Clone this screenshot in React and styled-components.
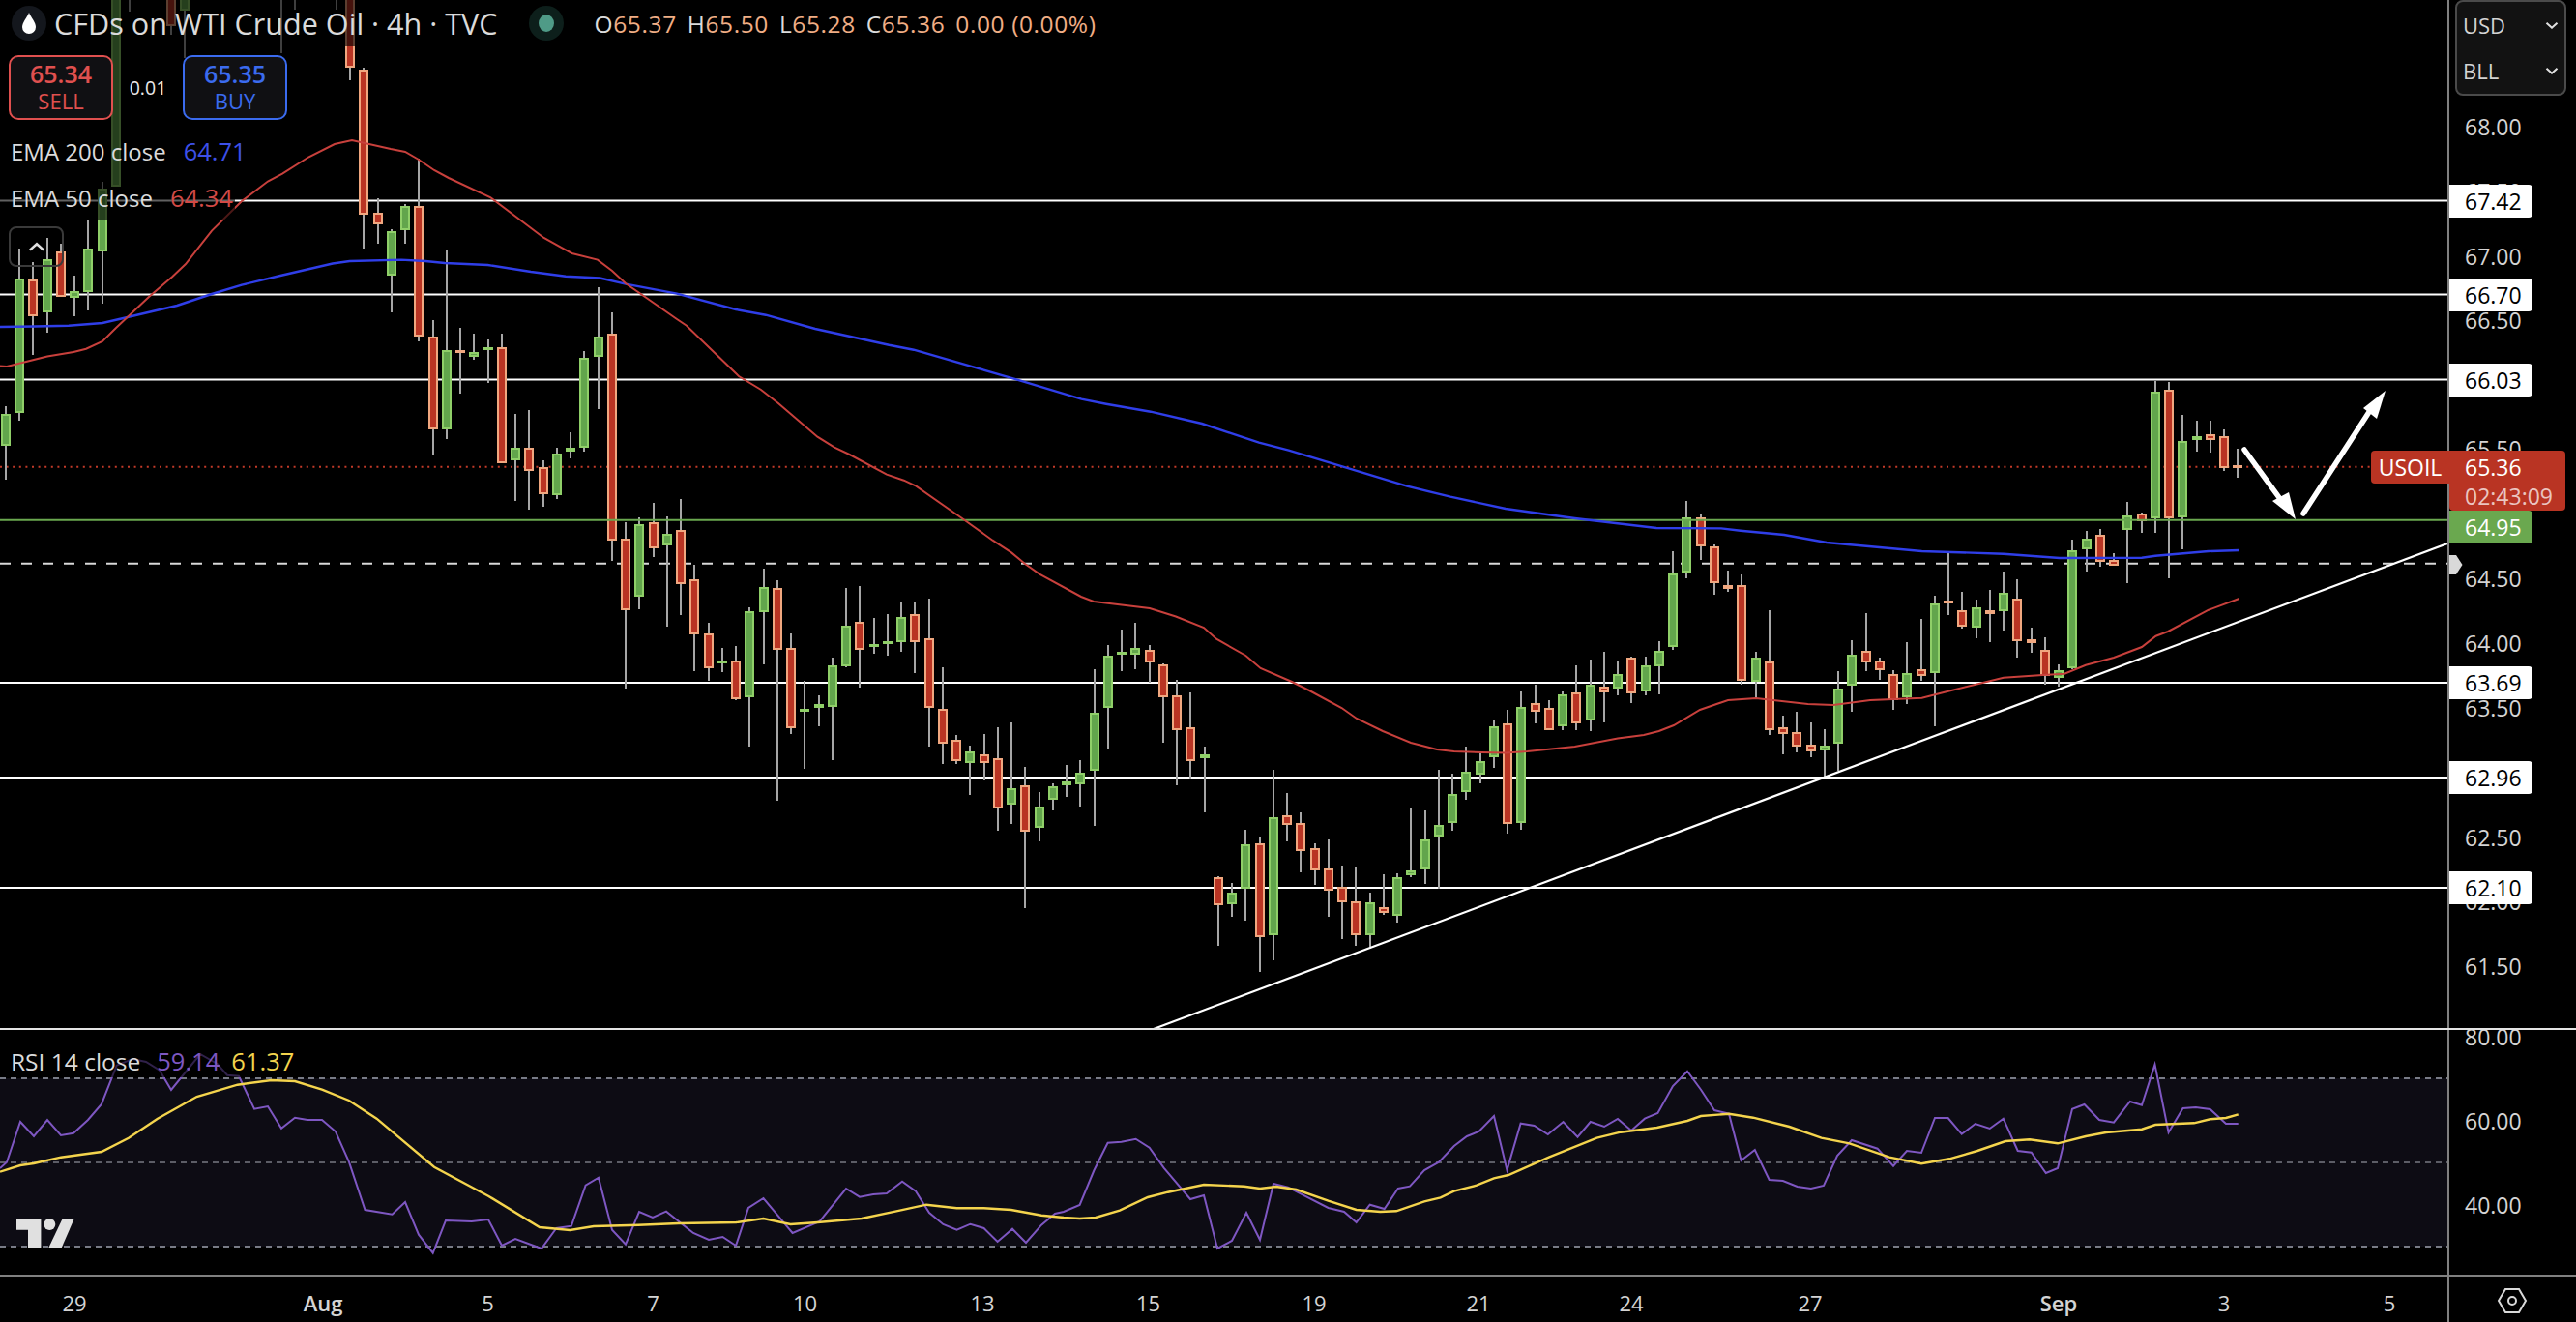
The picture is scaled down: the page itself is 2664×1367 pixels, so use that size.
import React from "react";
import styled, { createGlobalStyle } from "styled-components";

// [index, wickTop, bodyTop, bodyBottom, wickBottom, "g" | "r"], all in page pixels
const CANDLES = [
  [0,420,427.5,461,496,"g"],[1,257,287.5,427,435,"g"],[2,271,288.5,327,367,"r"],[3,246,268,323,343.5,"g"],
  [4,252,259.5,307,307,"r"],[5,285,300.5,308,327,"g"],[6,228,256.5,302,321,"g"],[7,188,195,259.5,314,"g"],
  [8,-10,-10,193,193,"g"],[9,-10,-10,-5,12,"g"],[12,-10,-10,27,36,"r"],[13,-10,-10,11,60,"g"],
  [20,-10,-10,-5,55,"g"],[21,-10,-10,-5,10,"g"],[24,-10,-10,-5,10,"g"],[25,-10,-10,70,83,"r"],
  [26,70,71.5,221.5,256.5,"r"],[27,205,219.5,231.5,252,"r"],[28,237,239,284.5,322.5,"g"],[29,211,212.5,237.5,252,"g"],
  [30,164,213,348,352.5,"r"],[31,331,347.5,444,470,"r"],[32,259,361.5,443.5,454,"g"],[33,339,362,364,407,"r"],
  [34,345,364,369,372,"g"],[35,351,358.5,360.5,396,"g"],[36,345,359,478.5,478.5,"r"],[37,428,463,476,518,"g"],
  [38,424,462.5,486.5,527,"r"],[39,476,483,511,524,"r"],[40,463,468.5,512,516,"g"],[41,447,463,467,474,"g"],
  [42,363,370,462.5,467,"g"],[43,297,348,368.5,422.5,"g"],[44,323,345,559,579.5,"r"],[45,540,556.5,630.5,712,"r"],
  [46,535,542,617,629.5,"g"],[47,520,540,567,575.5,"r"],[48,534,551.5,563.5,647.5,"g"],[49,516,547.5,603.5,635.5,"r"],
  [50,584,599,655.5,694,"r"],[51,644,654.5,690.5,703.5,"r"],[52,670,683,685,694.5,"g"],[53,668,683,722.5,724,"r"],
  [54,628,631.5,720.5,772,"g"],[55,587.5,607,632.5,687,"g"],[56,600,608,672,827.5,"r"],[57,655,670,752.5,759,"r"],
  [58,704,733,735,794.5,"g"],[59,719,728,732,750.5,"g"],[60,680,687.5,730.5,785.5,"g"],[61,608,646.5,688.5,689.5,"g"],
  [62,606,642.5,672,710.5,"r"],[63,639,666,668.5,675.5,"g"],[64,635,663,665,677.5,"g"],[65,623,638,663.5,674,"g"],
  [66,623,635,663.5,695.5,"r"],[67,619,660,732,772,"r"],[68,690,732.5,768.5,789.5,"r"],[69,760,764.5,787,789.5,"r"],
  [70,771,776.5,788.5,822,"g"],[71,759,780,788.5,807,"r"],[72,752,784,835.5,858.5,"r"],[73,747,814.5,832,852,"g"],
  [74,792.5,811.5,859.5,938.5,"r"],[75,819,834,855.5,869.5,"g"],[76,810,812.5,826.5,837.5,"g"],[77,791,808,812,824,"g"],
  [78,786,799,810.5,833.5,"g"],[79,692,736.5,796.5,853.5,"g"],[80,667,678,732,773.5,"g"],[81,651,674,676,694,"g"],
  [82,644,670,677,692,"g"],[83,667,671.5,684.5,706,"r"],[84,686,686.5,720.5,768,"r"],[85,703,719,754.5,812,"r"],
  [86,716,751.5,786.5,805.5,"r"],[87,772,780,783.5,839.5,"g"],[88,906,906.5,935.5,977.5,"r"],[89,912.5,922.5,934.5,948,"g"],
  [90,858,872.5,918.5,952,"g"],[91,866,871.5,968.5,1004.5,"r"],[92,795.5,844.5,967,993,"g"],[93,820,842.5,852.5,869.5,"r"],
  [94,840,850.5,879.5,902,"r"],[95,872,876.5,899.5,915,"r"],[96,868,898,920.5,948,"r"],[97,895,916.5,932.5,970.5,"r"],
  [98,895.5,931.5,967,977.5,"r"],[99,923,932.5,967,978.5,"g"],[100,904,938,943.5,945.5,"r"],[101,903,906.5,947,953.5,"g"],
  [102,835,900,904.5,907,"g"],[103,838,868,898.5,913.5,"g"],[104,796,852.5,864.5,918.5,"g"],[105,800,820.5,850.5,858.5,"g"],
  [106,772,798,818.5,827,"g"],[107,778.5,786.5,800.5,809.5,"g"],[108,744,750.5,782.5,793.5,"g"],[109,734,747.5,852,862,"r"],
  [110,715,730.5,850.5,857.5,"g"],[111,708,726.5,735.5,748,"r"],[112,724,731.5,754.5,754.5,"r"],[113,715,718,750.5,754.5,"g"],
  [114,688,715.5,747.5,755,"r"],[115,682,707.5,744.5,755.5,"g"],[116,674,710,715.5,747,"r"],[117,683,696.5,712,718.5,"g"],
  [118,679,680,716.5,727,"r"],[119,679,687.5,714.5,718.5,"g"],[120,662.5,672.5,688.5,717.5,"g"],[121,570,592.5,668.5,672,"g"],
  [122,518,534.5,592,597.5,"g"],[123,531,535,564.5,579,"r"],[124,563,564.5,602.5,614.5,"r"],[125,590,604.5,608.5,612,"r"],
  [126,594,604.5,703.5,707.5,"r"],[127,674,680,704.5,722.5,"g"],[128,631,683.5,754.5,759.5,"r"],[129,740,751.5,758.5,779.5,"r"],
  [130,736,756.5,772,778,"r"],[131,747,770,777,783,"r"],[132,754,771,775.5,803.5,"g"],[133,694,711.5,768.5,796.5,"g"],
  [134,662,676.5,708.5,735.5,"g"],[135,634,672.5,684.5,694,"r"],[136,680,682.5,692.5,702.5,"r"],[137,692.5,696.5,723.5,734,"r"],
  [138,664,695.5,720.5,728,"g"],[139,640,691.5,698.5,704,"r"],[140,616,623.5,695.5,750.5,"g"],[141,570.5,620.5,623.5,635.5,"r"],
  [142,612,630.5,647.5,649.5,"r"],[143,620,627.5,648.5,660,"g"],[144,610,630.5,634.5,663.5,"r"],[145,591,612.5,631.5,652,"g"],
  [146,599,618.5,662.5,679.5,"r"],[147,648.5,660.5,664.5,674.5,"r"],[148,659,671.5,699,708,"r"],[149,687,692.5,700.5,709.5,"g"],
  [150,558,568.5,690.5,691.5,"g"],[151,548.5,556.5,567.5,590.5,"g"],[152,547,552.5,580.5,585.5,"r"],[153,572,578.5,584.5,584.5,"r"],
  [154,518.5,532.5,547.5,602.5,"g"],[155,530,530.5,538.5,550.5,"r"],[156,393.5,404.5,535.5,550.5,"g"],[157,395,402.5,535.5,597.5,"r"],
  [158,428.5,455.5,534.5,567.5,"g"],[159,435,450.5,454.5,466.5,"g"],[160,435,448.5,454.5,467.5,"r"],[161,444,450.5,483.5,487,"r"],
  [162,464,481,482.5,494,"r"],
];

const EMA_50 = "0,378.6 7,379 27,374 49,368.6 76,364 89,360.7 106,353 120,339 154,307 178.6,285.7 192,273 219,238.6 250,208 277,187.5 292,179.6 319,162.5 346,149 364,145 404,154 419,157 433,165 449,176 464,184 507,204 562.5,246 591.5,262 618,268.6 633,280 647,293 700,330 710,336.7 764,389 787,403 804.6,416.7 845.4,451.7 863,462.7 878.6,470 917,490.7 934.7,496.7 947.4,502.7 996,536.7 1026.5,558.7 1046,571.4 1060,583 1075,593.6 1118,617 1131,622 1189,629 1216,637.5 1245,649 1258,660.7 1288.4,678 1303.6,691 1336,705 1354,714 1387.5,732 1403,743 1430,756 1459,768 1486,775 1503.6,777 1532.6,778 1557,778.6 1579.5,777 1628.6,772 1673,763.6 1700,760 1715.6,756 1731,750 1758,734 1787,724 1816,722 1869.6,728 1896,729 1934,724 1987.5,721.7 2014,715 2072,700.7 2112.5,698 2135,696.7 2157,687.7 2186,680 2215,669 2229.5,657.7 2242,653 2284,630.7 2315.6,619";
const EMA_200 = "0,338 36,337.5 71,336.8 106,334 134,327.5 183,316 219,304 250,294.6 290,285 344,272.5 361.6,270 415,268.6 440,270 460,272 504.5,274 549,281 585,285.7 620.5,287.5 647,293.6 700,303.6 761,320 792,325.7 843,340 919.4,356.7 945,361.7 1052,392.7 1118.4,412.7 1144,417.7 1190,425.7 1243,438 1302,457.7 1332.7,465.7 1389,482.7 1455,502.7 1500,513.7 1557,526 1628.6,536 1713,546 1780,546.4 1800,548.7 1845,553 1889,561 1987.5,570 2072,572.7 2130,577 2215,576.7 2229,574.7 2284,570 2315.6,569";
const RSI = "0,1208 7,1201.7 21,1160 35,1175 49,1158 63,1174 76,1171.7 91,1158 105,1141.7 120.7,1101.7 137,1095 151,1098 165,1106.7 177,1127 207,1090 224.6,1100 235,1111.7 247,1112.7 263,1146.7 277,1144 291,1166.7 305,1155.7 318,1158 333,1158 347,1170 361,1201.7 377.5,1251 405.6,1255.7 419,1243 433,1276.7 447.7,1295.7 461,1262 487.7,1263 505,1261 519,1288 533,1281 560,1291 575.4,1270 590.9,1267.7 605.6,1225.7 619,1217.7 633,1271.7 647,1286.7 661,1253 675,1259 689,1252.7 717,1275 733,1282 747.4,1279 761,1288 774,1249 789.5,1239 819.6,1275 847.7,1263 875,1229 889,1237.7 903,1235 917,1234 933,1221.7 947,1231.7 961,1254 975.4,1266 989.5,1271.7 1003.5,1265.7 1017.5,1270 1031.6,1284 1047,1270.7 1061,1285 1077,1266.7 1091,1255 1100,1253 1116.6,1246 1131.5,1210 1145.6,1181.7 1159.7,1180.7 1174.6,1177.7 1188.7,1186.7 1203.6,1207.7 1231,1240 1245,1236 1259,1291 1274,1283 1289,1254 1303,1282 1317,1224 1332,1227.7 1373.6,1249 1390,1253 1402.7,1264 1416.7,1245.7 1431.7,1250 1445.8,1229 1458,1226.7 1473,1210 1488,1201.7 1503.8,1185 1517,1175 1529.5,1170 1545,1154 1558.5,1210 1572.6,1161.7 1586.7,1164 1600.8,1173 1616.6,1160 1631.5,1175.7 1644.8,1160 1659,1165 1673,1157 1687,1169 1701,1156.7 1714.4,1151 1730,1123 1745,1107.7 1759,1126.7 1773,1148 1788,1151.7 1800.6,1200 1814.8,1189 1829.7,1220 1843.8,1221 1858.7,1227 1872.8,1229 1886,1226 1900,1195 1915,1179 1941.6,1187.7 1958,1205.7 1972,1190 1987,1192 2001,1156 2014.6,1156 2028.7,1172.7 2042.8,1162 2057.7,1167 2071.8,1156.7 2086.7,1190 2100.8,1191.7 2115.8,1213 2128,1208 2143,1146.7 2155.6,1142 2171,1158 2186,1160.7 2202.8,1139 2215,1142.7 2228.5,1100.7 2242.6,1171 2257.5,1146 2270.8,1145 2285.7,1147 2302,1162 2314.7,1162";
const RSI_MA = "0,1211.7 21,1205 35,1203 63,1196.7 105,1191 133,1176.7 163,1156.7 203.5,1134 245.6,1121.7 280.7,1117 305,1118 333,1126.7 361,1138 389.5,1156.7 449,1206.7 505,1236.7 558,1269 589.5,1272 614,1268 660,1266.7 701.8,1265 761.4,1264 789.5,1260 817.5,1266 845.6,1264 891,1260 926,1252.7 958,1245.7 989.5,1249.3 1017.5,1249.3 1045.6,1251 1077,1256.7 1100,1259 1116.6,1260 1133,1259 1158,1251.7 1187,1238 1207.8,1232.7 1245,1225 1286.6,1226.7 1303,1229 1319.7,1227 1340.5,1230 1373.6,1241.7 1402.7,1251 1427.5,1253 1444,1252.3 1473,1242.3 1489.7,1238.3 1503.8,1231.7 1527,1225.7 1545,1218.3 1560,1215 1601.7,1196.7 1651.4,1176.7 1676,1170.7 1713.6,1166 1745,1159 1759,1154 1788,1151.7 1813,1155.7 1850.4,1165 1883.6,1176.7 1912.6,1182.3 1954,1196.7 1987,1203.3 2016,1198.3 2045,1190 2074,1180 2099,1178.3 2128,1182.3 2157,1175 2178,1171 2215,1167.7 2229,1163 2269,1161.3 2285.7,1157.3 2302,1156 2314.7,1152.3";

const LEVELS = [207.5, 304.5, 392.5, 706, 804, 918];
const AXIS_TICKS = [[68, 131], [67.5, 198], [67, 264.5], [66.5, 331], [65.5, 464], [64.5, 598], [64, 665], [63.5, 732], [62.5, 866], [62, 932], [61.5, 999]];
const AXIS_MARKS = [["67.42", 208], ["66.70", 305], ["66.03", 393], ["63.69", 706], ["62.96", 804], ["62.10", 918]];
const DATES = [["29", 77], ["Aug", 334, true], ["5", 504.5], ["7", 675.5], ["10", 832.5], ["13", 1016], ["15", 1187.5], ["19", 1359], ["21", 1529], ["24", 1687], ["27", 1872], ["Sep", 2129, true], ["3", 2300], ["5", 2471]];

const GREEN = "#6aa84f";
const RED = "#b93423";
const FONT = `"Open Sans", "Liberation Sans", sans-serif`;

const GlobalStyle = createGlobalStyle`
  html, body { margin: 0; background: #000; }
  body { font-family: ${FONT}; color: #dbdbdb; overflow: hidden; }
`;

const Page = styled.div` width: 2664px; height: 1367px; background: #000; display: flex; flex-direction: column; `;
const Row = styled.div`
  display: grid; grid-template-columns: 2531px 1fr;
  height: ${p => p.$h}px; box-sizing: border-box;
  border-bottom: ${p => p.$line ? `2px solid ${p.$line}` : "none"};
`;
const Pane = styled.div` position: relative; overflow: hidden; `;
const ChartSvg = styled.svg` display: block; `;

const Legend = styled.div` position: absolute; top: 0; left: 0; display: flex; flex-direction: column; align-items: flex-start; `;
const LegendRow = styled.div`
  display: flex; align-items: center; gap: ${p => p.$gap || 0}px; box-sizing: border-box;
  height: ${p => p.$h}px; padding: 0 ${p => p.$pr ?? 0}px 0 ${p => p.$pl ?? 11}px;
  margin-top: ${p => p.$mt || 0}px;
  font-size: ${p => p.$size || 24}px; white-space: nowrap;
  background: rgba(0, 0, 0, .62);
`;
const SymbolIcon = styled.span`
  width: 36px; height: 36px; border-radius: 50%; background: #14171d; margin-right: 8px;
  display: flex; align-items: center; justify-content: center;
`;
const Title = styled.span` font-size: 30.6px; color: #dbdbdb; `;
const StatusDot = styled.span`
  width: 36px; height: 36px; border-radius: 50%; background: #0d1f1b; margin: 0 32px;
  display: flex; align-items: center; justify-content: center;
  &::after { content: ""; width: 16px; height: 18px; border-radius: 50%; background: #4f9b87; }
`;
const Ohlc = styled.span` font-size: 24.5px; letter-spacing: .6px; color: #dbdbdb; margin-right: 11px; `;
const Peach = styled.span` color: #f0ae85; `;
const TradeBox = styled.div`
  width: 108px; height: 67px; box-sizing: border-box; border-radius: 10px;
  border: 2px solid ${p => p.$color}; background: #101013; color: ${p => p.$color};
  display: flex; flex-direction: column; align-items: center; justify-content: center;
  line-height: 28px;
`;
const TradePrice = styled.span` font-size: 25px; font-weight: 600; `;
const TradeLabel = styled.span` font-size: 22px; `;
const Spread = styled.span` width: 72px; text-align: center; font-size: 19.5px; color: #e8e8e8; `;
const Value = styled.span` font-size: 25.5px; color: ${p => p.$color}; margin-left: ${p => p.$ml || 0}px; `;
const CollapseBtn = styled.div`
  width: 57px; height: 42px; box-sizing: border-box; margin: 6px 0 0 9px;
  border: 2px solid #3a3a3a; border-radius: 8px;
  display: flex; align-items: center; justify-content: center;
`;
const Watermark = styled.svg` position: absolute; left: 10px; top: 194px; `;

const Axis = styled.div`
  position: relative; border-left: 2px solid #808080;
  overflow: ${p => p.$clip ? "hidden" : "visible"};
  font-size: 23px; color: #d4d4d4;
`;
const Tick = styled.span`
  position: absolute; left: 16px; top: ${p => p.$y}px; line-height: 30px; margin-top: -15px;
`;
const Mark = styled.span`
  position: absolute; left: 0; top: ${p => p.$y}px; width: 86px; height: 34px; margin-top: -17px;
  padding-left: 16px; box-sizing: border-box; line-height: 34px;
  background: ${p => p.$bg || "#fff"}; color: ${p => p.$fg || "#000"};
  border-radius: 0 4px 4px 0;
`;
const LastPrice = styled.div`
  position: absolute; left: 0; top: 466px; width: 120px; height: 62px; box-sizing: border-box;
  background: ${RED}; color: #fff; border-radius: 0 4px 4px 4px; padding-left: 16px;
  display: flex; flex-direction: column; line-height: 30px; padding-top: 2px;
`;
const Countdown = styled.span` color: rgba(255, 255, 255, .72); `;
const SymbolTag = styled.span`
  position: absolute; right: 100%; top: 466px; width: 81px; height: 34px; text-align: center;
  line-height: 34px; background: ${RED}; color: #fff; border-radius: 4px 0 0 4px;
`;
const ScaleMarker = styled.svg` position: absolute; left: 0; top: 574px; `;
const UnitBox = styled.div`
  position: absolute; left: 6px; top: 0; width: 115px; height: 99px; box-sizing: border-box;
  background: #121212; border: 2px solid #4a4a4a; border-radius: 8px;
  display: flex; flex-direction: column; justify-content: space-around; padding: 0 6px;
`;
const UnitRow = styled.div` display: flex; align-items: center; justify-content: space-between; font-size: 22px; line-height: 30px; `;

const TimeAxis = styled.div` position: relative; font-size: 22px; color: #d4d4d4; `;
const DateLabel = styled.span`
  position: absolute; left: ${p => p.$x}px; top: 12px; line-height: 30px; transform: translateX(-50%);
  font-weight: ${p => p.$bold ? 600 : 400};
`;
const Corner = styled.div`
  border-left: 2px solid #808080; display: flex; align-items: center; justify-content: center; padding-right: 2px; padding-top: 2px;
`;

const Chevron = ({ up, size = 14 }) => (
  <svg width={size} height={size * 0.6} viewBox="0 0 14 8">
    <path d={up ? "M1.5 6.5 7 1.5l5.5 5" : "M1.5 1.5 7 6.5l5.5-5"} fill="none" stroke="#e0e0e0" strokeWidth="2" />
  </svg>
);

const Candle = ({ i, wickTop, top, bottom, wickBottom, dir }) => {
  const x = Math.round(5.8 + 14.25 * i);
  return (
    <g shapeRendering="crispEdges">
      <rect x={x - 1} y={wickTop} width="2" height={wickBottom - wickTop} fill="#a6a6a6" />
      <rect
        x={x - 4} y={top + 1} width="8" height={Math.max(bottom - top - 2, 1)}
        fill={dir === "g" ? "#62a54c" : RED}
        stroke={dir === "g" ? "#8fcf68" : "#f0a77f"} strokeWidth="2"
      />
    </g>
  );
};

const MainChart = () => (
  <ChartSvg width="2531" height="1063" viewBox="0 0 2531 1063">
    {LEVELS.map(y => <line key={y} x1="0" x2="2531" y1={y} y2={y} stroke="#fff" strokeWidth="2" />)}
    <line x1="0" x2="2531" y1="482.7" y2="482.7" stroke="#c23a28" strokeWidth="2" strokeDasharray="2 4.6" />
    <line x1="0" x2="2531" y1="582.7" y2="582.7" stroke="#d9d9d9" strokeWidth="2" strokeDasharray="11 11" />
    {CANDLES.map(([i, wickTop, top, bottom, wickBottom, dir]) => (
      <Candle key={i} i={i} wickTop={wickTop} top={top} bottom={bottom} wickBottom={wickBottom} dir={dir} />
    ))}
    <line x1="0" x2="2531" y1="537.7" y2="537.7" stroke={GREEN} strokeWidth="2" />
    <polyline points={EMA_200} fill="none" stroke="#2f3ee8" strokeWidth="2.4" />
    <polyline points={EMA_50} fill="none" stroke="#c8403c" strokeWidth="2" />
    <line x1="1193" y1="1064" x2="2531" y2="562" stroke="#fff" strokeWidth="2.2" />
    {/* drawn arrows */}
    <path d="M2321 465 2361 520" stroke="#fff" strokeWidth="5.5" strokeLinecap="round" fill="none" />
    <path d="M2374 537 2350 518 2367 509Z" fill="#fff" />
    <path d="M2382 531 2450 426" stroke="#fff" strokeWidth="5.5" strokeLinecap="round" fill="none" />
    <path d="M2467 404 2444 422 2458 433Z" fill="#fff" />
  </ChartSvg>
);

const RsiChart = () => (
  <ChartSvg width="2531" height="253" viewBox="0 1065 2531 253">
    <rect x="0" y="1115" width="2531" height="174" fill="#0d0c14" />
    <line x1="0" x2="2531" y1="1115" y2="1115" stroke="#787b86" strokeWidth="2" strokeDasharray="6 5" />
    <line x1="0" x2="2531" y1="1202" y2="1202" stroke="#5c5d66" strokeWidth="2" strokeDasharray="6 5" />
    <line x1="0" x2="2531" y1="1289" y2="1289" stroke="#787b86" strokeWidth="2" strokeDasharray="6 5" />
    <polyline points={RSI} fill="none" stroke="#7e57c2" strokeWidth="2" />
    <polyline points={RSI_MA} fill="none" stroke="#f4d44d" strokeWidth="2.4" />
  </ChartSvg>
);

export default function App() {
  return (
    <Page>
      <GlobalStyle />
      <Row $h={1065} $line="#e4e4e4">
        <Pane>
          <MainChart />
          <Legend>
            <LegendRow $h={48} $pl={12} $pr={8}>
              <SymbolIcon>
                <svg width="14" height="22" viewBox="0 0 14 22">
                  <path d="M7 0C9 5 14 10 14 15a7 7 0 0 1-14 0C0 10 5 5 7 0Z" fill="#fff" />
                </svg>
              </SymbolIcon>
              <Title>CFDs on WTI Crude Oil · 4h · TVC</Title>
              <StatusDot />
              <Ohlc>O<Peach>65.37</Peach></Ohlc>
              <Ohlc>H<Peach>65.50</Peach></Ohlc>
              <Ohlc>L<Peach>65.28</Peach></Ohlc>
              <Ohlc>C<Peach>65.36</Peach></Ohlc>
              <Ohlc><Peach>0.00 (0.00%)</Peach></Ohlc>
            </LegendRow>
            <LegendRow $h={84} $pl={9}>
              <TradeBox $color="#e0504f">
                <TradePrice>65.34</TradePrice>
                <TradeLabel>SELL</TradeLabel>
              </TradeBox>
              <Spread>0.01</Spread>
              <TradeBox $color="#3b6bef">
                <TradePrice>65.35</TradePrice>
                <TradeLabel>BUY</TradeLabel>
              </TradeBox>
            </LegendRow>
            <LegendRow $h={48} $gap={18} $pr={2}>
              EMA 200 close <Value $color="#3d50e8">64.71</Value>
            </LegendRow>
            <LegendRow $h={48} $gap={18} $pr={2}>
              EMA 50 close <Value $color="#d24a46">64.34</Value>
            </LegendRow>
            <CollapseBtn><Chevron up size={18} /></CollapseBtn>
          </Legend>
        </Pane>
        <Axis>
          {AXIS_TICKS.map(([p, y]) => <Tick key={p} $y={y}>{p.toFixed(2)}</Tick>)}
          {AXIS_MARKS.map(([label, y]) => <Mark key={label} $y={y}>{label}</Mark>)}
          <Mark $y={545} $bg={GREEN} $fg="#fff">64.95</Mark>
          <SymbolTag>USOIL</SymbolTag>
          <LastPrice>
            65.36
            <Countdown>02:43:09</Countdown>
          </LastPrice>
          <ScaleMarker width="14" height="20" viewBox="0 0 14 20">
            <path d="M0 0H7L13.5 10 7 20H0Z" fill="#d9d9d9" />
          </ScaleMarker>
          <UnitBox>
            <UnitRow>USD <Chevron /></UnitRow>
            <UnitRow>BLL <Chevron /></UnitRow>
          </UnitBox>
        </Axis>
      </Row>
      <Row $h={255} $line="#808080">
        <Pane>
          <RsiChart />
          <Legend>
            <LegendRow $h={34} $mt={15} $gap={12} $pr={4} $size={24.5}>
              RSI 14 close
              <Value $color="#7e57c2" $ml={5}>59.14</Value>
              <Value $color="#f4d44d">61.37</Value>
            </LegendRow>
          </Legend>
          <Watermark width="70" height="32" viewBox="10 1259 70 32">
            <path d="M17 1260H42.4V1290H29V1271.7H17Z" fill="#e0e0e0" />
            <ellipse cx="51.3" cy="1266" rx="6" ry="6" fill="#e0e0e0" />
            <path d="M64.7 1260H76.8L63.8 1290H50.4Z" fill="#e0e0e0" />
          </Watermark>
        </Pane>
        <Axis $clip>
          <Tick $y={6.5}>80.00</Tick>
          <Tick $y={93.5}>60.00</Tick>
          <Tick $y={180.5}>40.00</Tick>
        </Axis>
      </Row>
      <Row $h={47}>
        <TimeAxis>
          {DATES.map(([label, x, bold]) => <DateLabel key={x} $x={x} $bold={bold}>{label}</DateLabel>)}
        </TimeAxis>
        <Corner>
          <svg width="32" height="28" viewBox="0 0 32 28">
            <path d="M9 2H23L30 14 23 26H9L2 14Z" fill="none" stroke="#d9d9d9" strokeWidth="2" />
            <circle cx="16" cy="14" r="4" fill="none" stroke="#d9d9d9" strokeWidth="2" />
          </svg>
        </Corner>
      </Row>
    </Page>
  );
}
